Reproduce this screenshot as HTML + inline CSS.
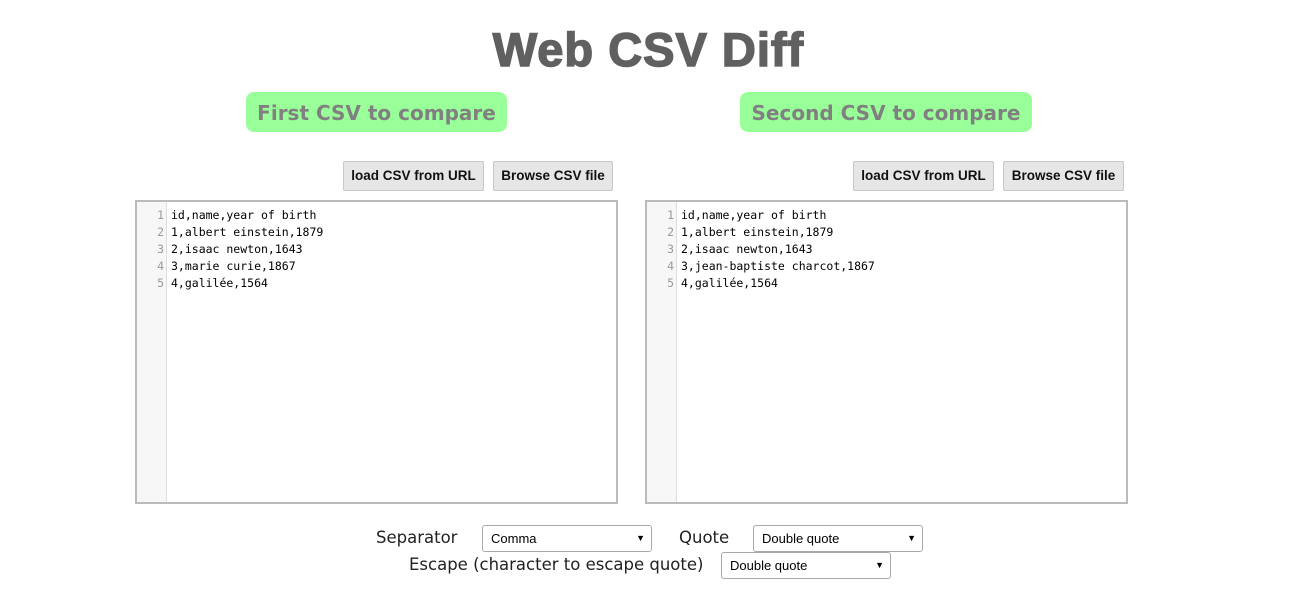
<!DOCTYPE html>
<html><head><meta charset="utf-8"><style>
body{margin:0;width:1297px;height:599px;background:#fff;position:relative;font-family:"Liberation Sans",Arial,sans-serif;overflow:hidden}
h1{position:absolute;left:0;width:1297px;top:22px;margin:0;text-align:center;font:900 47px "Liberation Sans",sans-serif;color:#606060;letter-spacing:1px;-webkit-text-stroke:1.5px #606060}
.g{position:absolute;top:92px;height:40px;background:#99ff99;border-radius:8px;color:#808080;font:bold 20px "DejaVu Sans",sans-serif;line-height:42px;text-align:center}
.b{position:absolute;top:161px;height:30px;background:#e6e6e6;border:1px solid #c8c8c8;border-radius:2px;box-sizing:border-box;font:bold 13.5px "Liberation Sans",sans-serif;color:#111;line-height:28px;text-align:center}
.ed{position:absolute;top:200px;width:483px;height:304px;border:2px solid #bbb;box-sizing:border-box;background:#fff}
.gut{position:absolute;left:0;top:0;bottom:0;width:29px;background:#f7f7f7;border-right:1px solid #ddd}
.ln{position:absolute;left:0;width:27px;text-align:right;color:#999;font:11.5px "DejaVu Sans Mono",monospace}
.tx{position:absolute;left:34px;font:11.5px "DejaVu Sans Mono",monospace;color:#000;white-space:pre}
.l{position:absolute;font:16.5px "DejaVu Sans",sans-serif;color:#222}
.s{position:absolute;height:27px;width:170px;border:1px solid #aaa;border-radius:3px;box-sizing:border-box;font:13px "Liberation Sans",sans-serif;padding-left:8px;line-height:25px;color:#000}
.s:after{content:"▼";position:absolute;right:6px;top:0;font-size:9px}
</style></head><body>
<h1>Web CSV Diff</h1>
<div class="g" style="left:246px;width:261px">First CSV to compare</div>
<div class="g" style="left:740px;width:292px">Second CSV to compare</div>
<div class="b" style="left:343px;width:141px">load CSV from URL</div>
<div class="b" style="left:493px;width:120px">Browse CSV file</div>
<div class="b" style="left:853px;width:141px">load CSV from URL</div>
<div class="b" style="left:1003px;width:121px">Browse CSV file</div>
<div class="ed" style="left:135px"><div class="gut"></div>
<div class="ln" style="top:5px;line-height:17px">1<br>2<br>3<br>4<br>5</div>
<div class="tx" style="top:5px;line-height:17px">id,name,year of birth
1,albert einstein,1879
2,isaac newton,1643
3,marie curie,1867
4,galilée,1564</div></div>
<div class="ed" style="left:645px"><div class="gut"></div>
<div class="ln" style="top:5px;line-height:17px">1<br>2<br>3<br>4<br>5</div>
<div class="tx" style="top:5px;line-height:17px">id,name,year of birth
1,albert einstein,1879
2,isaac newton,1643
3,jean-baptiste charcot,1867
4,galilée,1564</div></div>
<div class="l" style="left:376px;top:528px">Separator</div>
<div class="s" style="left:482px;top:525px">Comma</div>
<div class="l" style="left:679px;top:528px">Quote</div>
<div class="s" style="left:753px;top:525px">Double quote</div>
<div class="l" style="left:409px;top:555px">Escape (character to escape quote)</div>
<div class="s" style="left:721px;top:552px">Double quote</div>
</body></html>
